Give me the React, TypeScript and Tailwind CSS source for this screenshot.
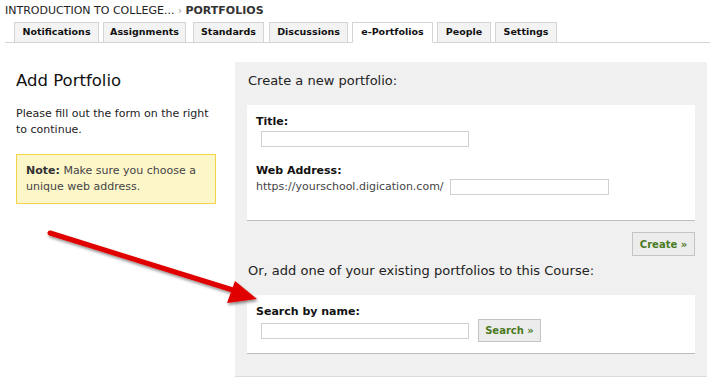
import React from "react";

const tabs = [
  { name: "Notifications", cls: "ml-0 w-[85px]" },
  { name: "Assignments", cls: "ml-[4px] w-[83px]" },
  { name: "Standards", cls: "ml-[7px] w-[71px]" },
  { name: "Discussions", cls: "ml-[5px] w-[79px]" },
  { name: "e-Portfolios", cls: "ml-[4px] w-[81px]", active: true },
  { name: "People", cls: "ml-[4px] w-[54px]" },
  { name: "Settings", cls: "ml-[4px] w-[62px]" },
];

function Arrow() {
  return (
    <svg
      className="absolute left-0 top-0 pointer-events-none"
      width="710"
      height="382"
      viewBox="0 0 710 382"
    >
      <defs>
        <filter id="shadow" x="-20%" y="-20%" width="140%" height="140%">
          <feDropShadow dx="1" dy="2" stdDeviation="1.5" floodColor="#000" floodOpacity="0.45" />
        </filter>
      </defs>
      <g filter="url(#shadow)">
        <line x1="50" y1="233" x2="236" y2="291" stroke="#e00000" strokeWidth="5" strokeLinecap="round" />
        <polygon points="227,303 235,281 257,299" fill="#e00000" />
      </g>
    </svg>
  );
}

export default function App() {
  return (
    <div
      className="relative w-[710px] h-[382px] bg-white overflow-hidden text-[#222]"
      style={{ fontFamily: '"DejaVu Sans", Verdana, sans-serif' }}
    >
      {/* breadcrumb */}
      <div className="pl-[5px] pt-[4px] h-[22px] text-[11px] leading-[14px] text-[#222]">
        INTRODUCTION TO COLLEGE...{" "}
        <span className="text-[#999] text-[10px]">›</span>{" "}
        <span className="font-bold text-[#333]">PORTFOLIOS</span>
      </div>

      {/* tabs */}
      <div className="ml-[5px] pl-[9px] flex border-b border-[#d4d4d4] h-[21px]">
        {tabs.map((t) => (
          <div
            key={t.name}
            className={`${t.cls} flex items-center justify-center border border-[#d4d4d4] text-[9.5px] font-bold text-[#111] ${
              t.active ? "h-[21px] bg-white border-b-white" : "h-[20px] bg-[#f3f3f3] border-b-0"
            }`}
          >
            {t.name}
          </div>
        ))}
      </div>

      <div className="flex mt-[19px]">
        {/* left column */}
        <div className="w-[235px] pl-[16px] pr-[19px]">
          <h1 className="mt-[8px] text-[16.5px] leading-[22px] text-[#111]">Add Portfolio</h1>
          <p className="mt-[14px] text-[11px] leading-[16px]">
            Please fill out the form on the right to continue.
          </p>
          <div className="mt-[16px] bg-[#fdf6c9] border border-[#f3d34a] px-[9px] py-[8px] text-[11px] leading-[16px] text-[#444]">
            <span className="font-bold text-[#333]">Note:</span> Make sure you choose a unique web address.
          </div>
        </div>

        {/* right panel */}
        <div className="w-[472px] h-[315px] bg-[#f0f0f0] border-b border-[#dcdcdc] pl-[12px] pr-[12px] pt-[10px]">
          <div className="pl-[1px] text-[13px] leading-[18px] text-[#222]">Create a new portfolio:</div>
          <div className="mt-[15px] h-[116px] bg-white border-b border-[#bdbdbd] pl-[9px] pt-[10px]">
            <div className="text-[11px] leading-[14px] font-bold text-[#111]">Title:</div>
            <input className="block ml-[5px] mt-[2px] w-[208px] h-[16px] border border-[#d0d0d0] bg-white outline-none" />
            <div className="mt-[17px] text-[11px] leading-[14px] font-bold text-[#111]">Web Address:</div>
            <div className="mt-[1px] flex items-center gap-[6px]">
              <span className="text-[11px] leading-[16px] text-[#444]">https://yourschool.digication.com/</span>
              <input className="block w-[159px] h-[16px] border border-[#d0d0d0] bg-white outline-none" />
            </div>
          </div>
          <div className="flex justify-end mt-[11px]">
            <button className="w-[63px] h-[24px] bg-[#ececec] border border-[#c4c4c4] text-[10px] font-bold text-[#4b7a1f]">
              Create »
            </button>
          </div>
          <div className="mt-[6px] pl-[1px] text-[13px] leading-[18px] text-[#222]">
            Or, add one of your existing portfolios to this Course:
          </div>
          <div className="mt-[15px] h-[59px] bg-white border-b border-[#bdbdbd] pl-[9px] pt-[10px]">
            <div className="text-[11px] leading-[14px] font-bold text-[#111]">Search by name:</div>
            <div className="flex items-center gap-[9px]">
              <input className="block ml-[5px] w-[208px] h-[16px] border border-[#d0d0d0] bg-white outline-none" />
              <button className="w-[63px] h-[23px] bg-[#ececec] border border-[#c4c4c4] text-[10px] font-bold text-[#4b7a1f]">
                Search »
              </button>
            </div>
          </div>
        </div>
      </div>

      <Arrow />
    </div>
  );
}
